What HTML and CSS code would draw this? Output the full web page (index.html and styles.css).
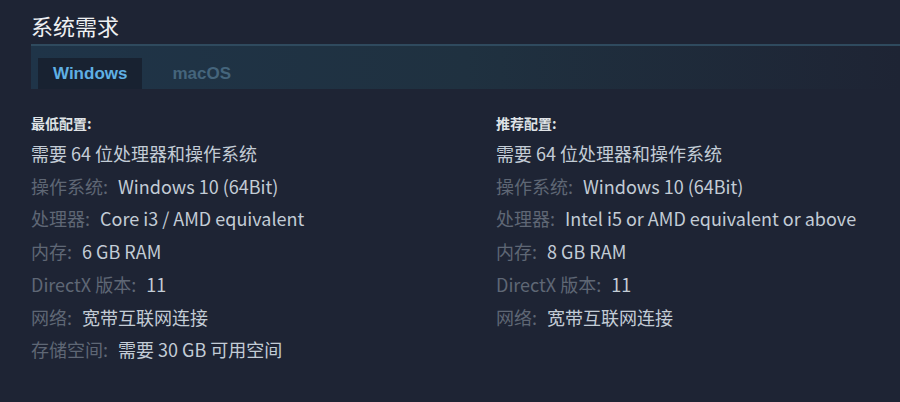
FILE: index.html
```html
<!DOCTYPE html>
<html lang="zh-CN">
<head>
    <meta charset="UTF-8">
    <meta name="viewport" content="width=device-width, initial-scale=1.0">
    <title>系统需求</title>
    <link rel="stylesheet" href="styles.css">
</head>
<body>

<div class="sysreq">
    <h2>系统需求</h2>

    <div class="tabs">
        <div class="tab active">Windows</div>
        <div class="tab">macOS</div>
    </div>

    <div class="columns">
        <div class="col">
            <div class="col-title">最低配置:</div>
            <ul>
                <li>需要 64 位处理器和操作系统</li>
                <li><strong>操作系统:</strong> Windows 10 (64Bit)</li>
                <li><strong>处理器:</strong> Core i3 / AMD equivalent</li>
                <li><strong>内存:</strong> 6 GB RAM</li>
                <li><strong>DirectX 版本:</strong> 11</li>
                <li><strong>网络:</strong> 宽带互联网连接</li>
                <li><strong>存储空间:</strong> 需要 30 GB 可用空间</li>
            </ul>
        </div>
        <div class="col">
            <div class="col-title">推荐配置:</div>
            <ul>
                <li>需要 64 位处理器和操作系统</li>
                <li><strong>操作系统:</strong> Windows 10 (64Bit)</li>
                <li><strong>处理器:</strong> Intel i5 or AMD equivalent or above</li>
                <li><strong>内存:</strong> 8 GB RAM</li>
                <li><strong>DirectX 版本:</strong> 11</li>
                <li><strong>网络:</strong> 宽带互联网连接</li>
            </ul>
        </div>
    </div>
</div>

</body>
</html>
```

FILE: styles.css
```css
body {
    font-family: "Noto Sans CJK SC", "Noto Sans", sans-serif;
    background-color: #1e2434;
    margin: 0;
    padding: 0;
    overflow: hidden;
}
.sysreq {
    padding: 11px 0 0 31px;
}
h2 {
    margin: 0;
    font-size: 22px;
    font-weight: normal;
    color: #eef0f2;
    line-height: 29px;
    padding-bottom: 4px;
}
.tabs {
    display: flex;
    height: 31px;
    padding: 12px 0 0 7px;
    border-top: 2px solid #2f4a5e;
    background: linear-gradient(to right, #1f3448 0%, #1f3140 50%, #1e2434 100%);
}
.tab {
    font-family: "Liberation Sans", Arial, sans-serif;
    font-size: 17px;
    font-weight: bold;
    line-height: 31px;
    padding: 0 15px;
    color: #45657c;
    margin-right: 15px;
}
.tab.active {
    background: #182231;
    color: #5fb0e4;
}
.columns {
    display: flex;
    padding-top: 25px;
}
.col {
    width: 465px;
    flex-shrink: 0;
}
.col + .col {
    flex: 1;
    width: auto;
    min-width: 0;
}
.col-title {
    font-size: 14px;
    font-weight: bold;
    color: #dfe3e6;
    line-height: 18px;
    margin-bottom: 5px;
}
ul {
    list-style: none;
    margin: 0;
    padding: 0;
}
li {
    font-size: 18px;
    line-height: 32.7px;
    color: #c3ccd6;
    white-space: nowrap;
}
li strong {
    font-weight: normal;
    color: #5f6775;
    margin-right: 6px;
}
```
